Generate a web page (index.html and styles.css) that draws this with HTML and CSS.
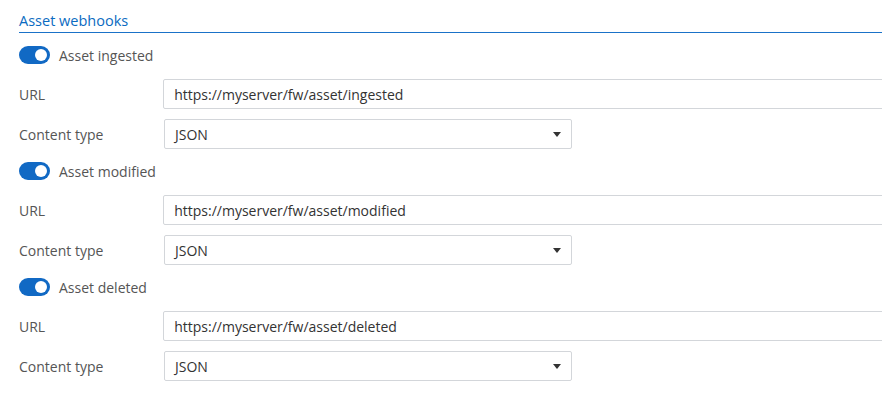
FILE: index.html
```html
<!DOCTYPE html>
<html>
<head>
<meta charset="utf-8">
<link rel="stylesheet" href="styles.css">
</head>
<body>
<div class="panel">
  <div class="section-title">Asset webhooks</div>

  <div class="hook">
    <div class="toggle-row">
      <span class="toggle"><span class="knob"></span></span>
      <span class="toggle-label">Asset ingested</span>
    </div>
    <div class="field">
      <label class="field-label">URL</label>
      <div class="input">https://myserver/fw/asset/ingested</div>
    </div>
    <div class="field">
      <label class="field-label">Content type</label>
      <div class="select">JSON<span class="caret"></span></div>
    </div>
  </div>

  <div class="hook">
    <div class="toggle-row">
      <span class="toggle"><span class="knob"></span></span>
      <span class="toggle-label">Asset modified</span>
    </div>
    <div class="field">
      <label class="field-label">URL</label>
      <div class="input">https://myserver/fw/asset/modified</div>
    </div>
    <div class="field">
      <label class="field-label">Content type</label>
      <div class="select">JSON<span class="caret"></span></div>
    </div>
  </div>

  <div class="hook">
    <div class="toggle-row">
      <span class="toggle"><span class="knob"></span></span>
      <span class="toggle-label">Asset deleted</span>
    </div>
    <div class="field">
      <label class="field-label">URL</label>
      <div class="input">https://myserver/fw/asset/deleted</div>
    </div>
    <div class="field">
      <label class="field-label">Content type</label>
      <div class="select">JSON<span class="caret"></span></div>
    </div>
  </div>
</div>
</body>
</html>
```

FILE: styles.css
```css
html, body {
  margin: 0;
  padding: 0;
  background: #ffffff;
  overflow: hidden;
}
body {
  font-family: "Open Sans", "Noto Sans", sans-serif;
  font-size: 14px;
  color: #444;
}
.panel {
  padding-left: 19px;
  width: 900px;
}
.section-title {
  color: #0b6bc1;
  font-size: 14.5px;
  font-weight: 500;
  height: 33px;
  box-sizing: border-box;
  padding-top: 12px;
  line-height: 18px;
  border-bottom: 1px solid #1a72c8;
}
.hook {
  display: flex;
  flex-direction: column;
  gap: 10px;
}
.toggle-row {
  display: flex;
  align-items: center;
  gap: 9px;
  height: 20px;
  padding-top: 12px;
  padding-bottom: 4px;
}
.toggle {
  width: 31px;
  height: 18px;
  border-radius: 9px;
  background: #1169c4;
  display: flex;
  align-items: center;
  justify-content: flex-end;
  padding-right: 3px;
  box-sizing: border-box;
}
.knob {
  width: 12px;
  height: 12px;
  border-radius: 50%;
  background: #fff;
}
.toggle-label {
  color: #555;
  font-size: 14px;
}
.field {
  display: flex;
  align-items: center;
  height: 30px;
}
.field-label {
  width: 145px;
  color: #555;
  font-size: 14px;
}
.input, .select {
  box-sizing: border-box;
  height: 30px;
  border: 1px solid #d3d6da;
  border-radius: 2px;
  padding: 0 10px;
  display: flex;
  align-items: center;
  color: #333;
  font-size: 14px;
}
.input {
  width: 760px;
}
.select {
  width: 408px;
  justify-content: space-between;
  padding-right: 10px;
}
.caret {
  width: 0;
  height: 0;
  border-left: 4px solid transparent;
  border-right: 4px solid transparent;
  border-top: 5px solid #333;
}
```
